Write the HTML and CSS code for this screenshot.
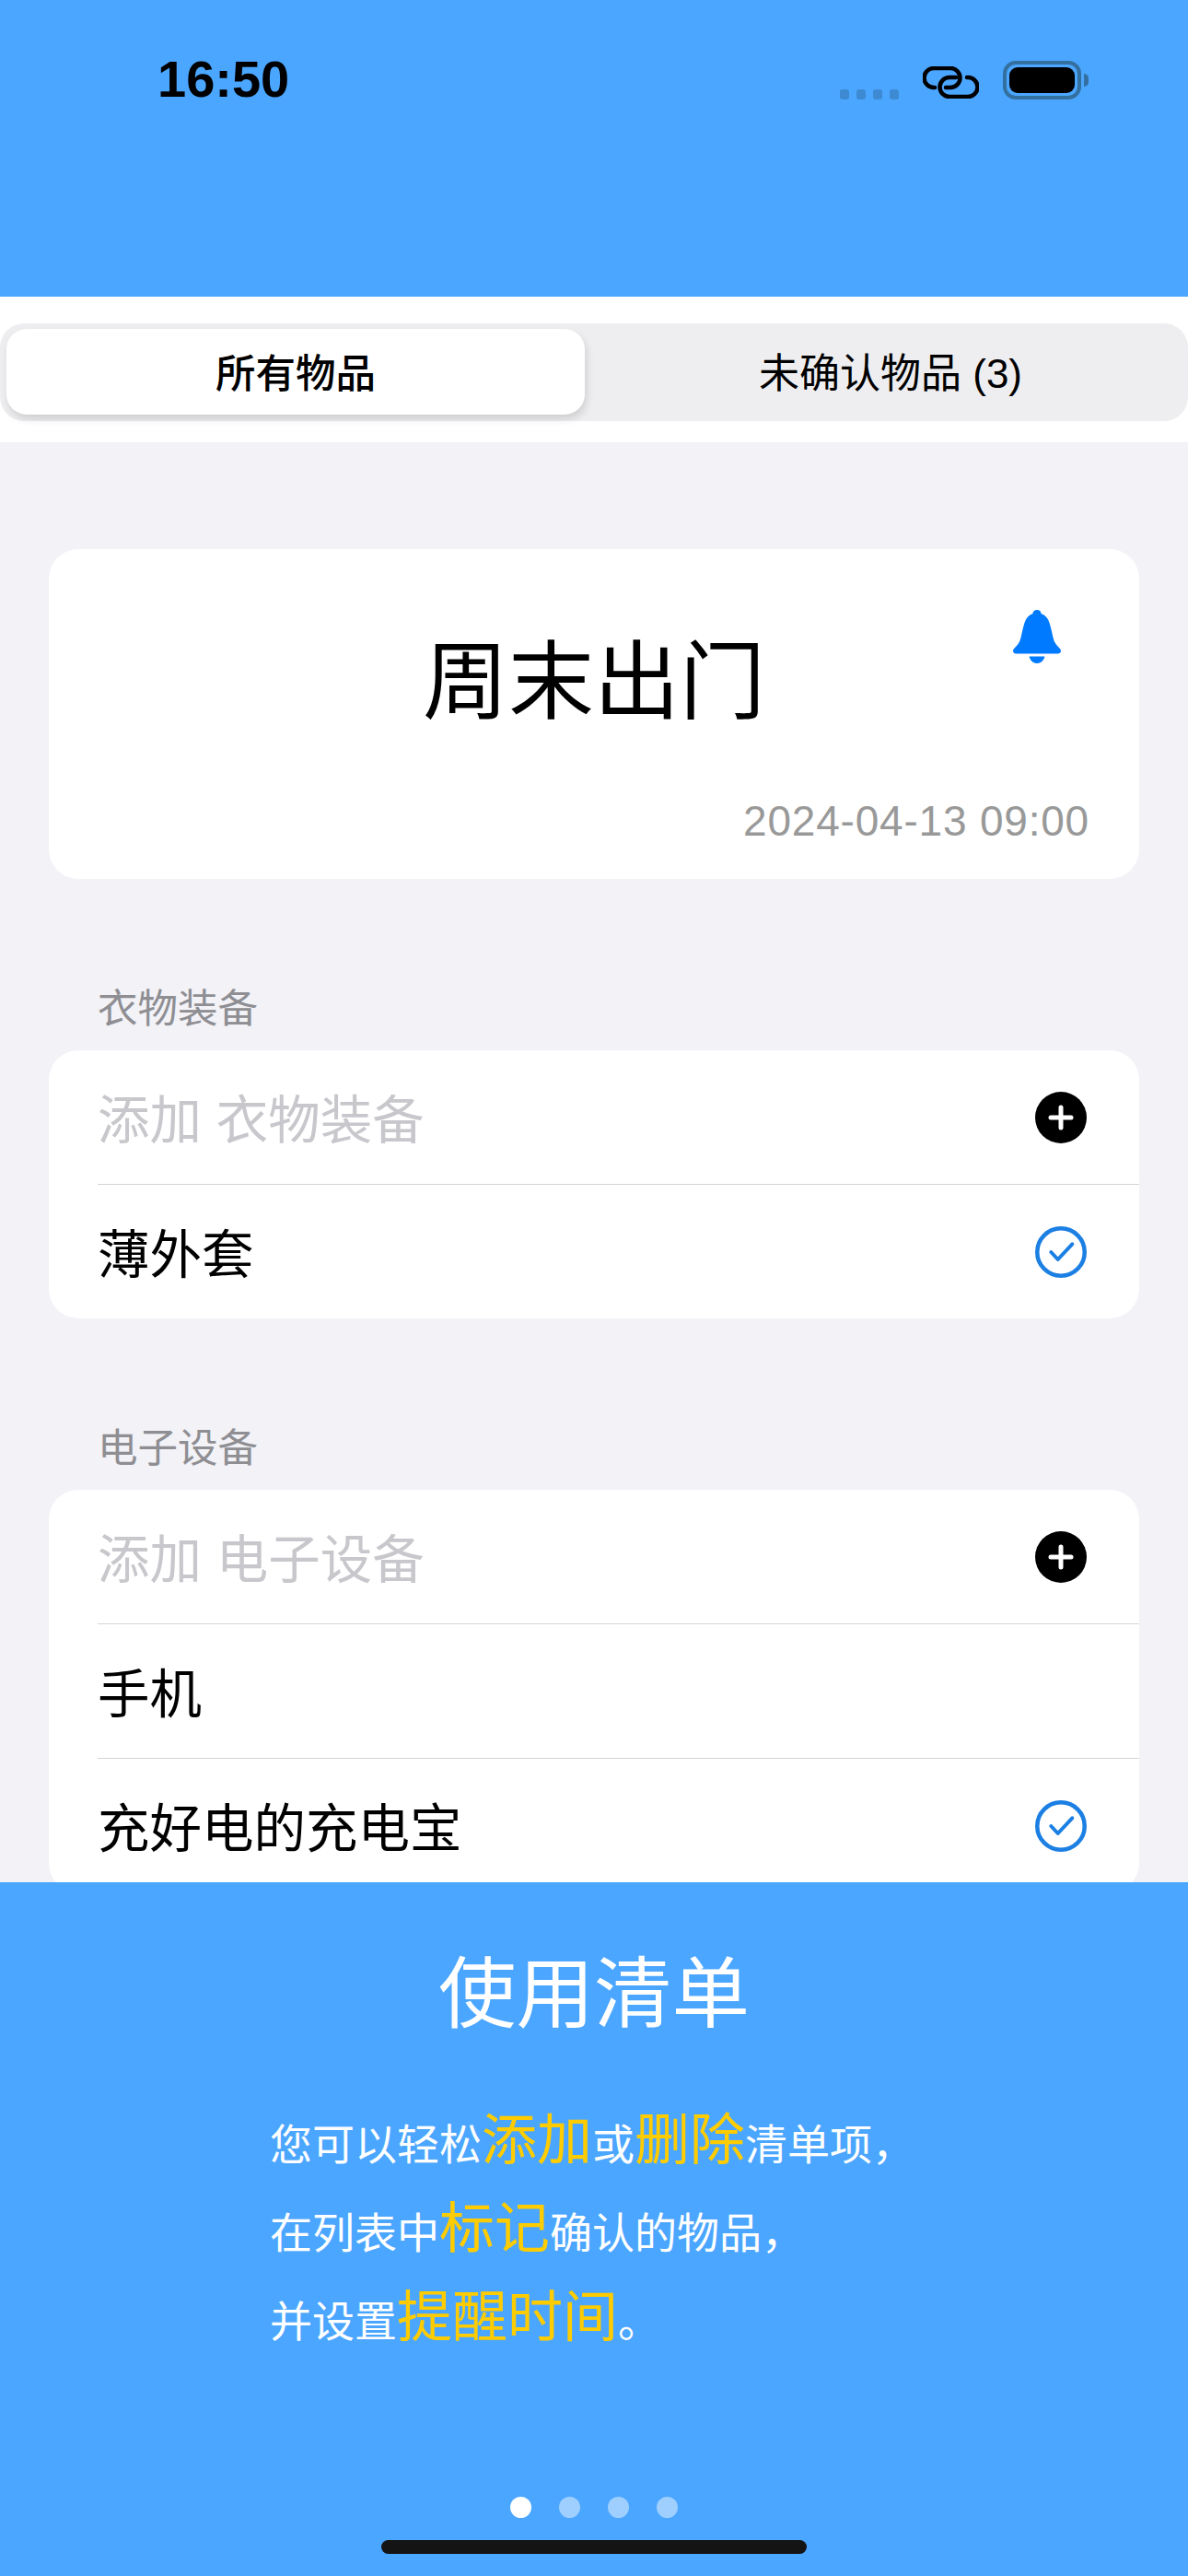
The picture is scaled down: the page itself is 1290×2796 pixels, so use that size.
FILE: index.html
```html
<!DOCTYPE html>
<html lang="zh">
<head>
<meta charset="UTF-8">
<title>使用清单</title>
<link rel="stylesheet" href="styles.css">
</head>
<body>
<div class="page">
    <header class="top">
        <div class="time">16:50</div>
        <div class="status">
            <div class="signal"><i></i><i></i><i></i><i></i></div>
            <svg class="link" width="61" height="35" viewBox="0 0 61 35" fill="none" stroke="#000" stroke-width="4.500" stroke-linecap="round">
                <path d="M13 23H12A10.5 10.5 0 0 1 12 2H30A10.5 10.5 0 0 1 30 23H25"/>
                <path d="M48 12H49A10.5 10.5 0 0 1 49 33H29A10.5 10.5 0 0 1 29 12H36"/>
            </svg>
            <div class="battery"><div class="level"></div></div>
            <div class="nub"></div>
        </div>
    </header>

    <div class="tabbar">
        <div class="tabs">
            <div class="tab on">所有物品</div>
            <div class="tab">未确认物品 (3)</div>
        </div>
    </div>

    <main class="content">
        <section class="card">
            <svg class="bell" width="52" height="58" viewBox="0 0 52 58" fill="#007aff">
                <path d="M26 0C28.500 0 30.500 1.500 30.500 4C35 5.500 38 9 39.500 14C41.500 20 42 24 43.500 30C44.500 35 47 38 50 41C51.500 42.500 52 43.500 52 44.500C52 46.500 50.500 47.500 48.500 47.500H3.500C1.500 47.500 0 46.500 0 44.500C0 43.500 .5 42.500 2 41C5 38 7.500 35 8.500 30C10 24 10.500 20 12.500 14C14 9 17 5.500 21.500 4C21.500 1.500 23.500 0 26 0Z"/>
                <path d="M17.500 50.500H34.500C33.500 55 30 58 26 58S18.500 55 17.500 50.500Z"/>
            </svg>
            <h1 class="card-title">周末出门</h1>
            <div class="card-date">2024-04-13 09:00</div>
        </section>

        <section class="group">
            <h2 class="group-name">衣物装备</h2>
            <ul class="list">
                <li class="row">
                    <span class="hint">添加 衣物装备</span>
                    <svg class="mark" width="56" height="56" viewBox="0 0 56 56"><circle cx="28" cy="28" r="28" fill="#000"/><path d="M28 17V39M17 28H39" stroke="#fff" stroke-width="5" stroke-linecap="round"/></svg>
                </li>
                <li class="row">
                    <span>薄外套</span>
                    <svg class="mark" width="56" height="56" viewBox="0 0 56 56" fill="none" stroke="#1b7fe3"><circle cx="28" cy="28" r="25.750" stroke-width="4.500"/><path d="M17.300 28L24.700 36L40.300 19.300" stroke-width="4" stroke-linecap="round" stroke-linejoin="round"/></svg>
                </li>
            </ul>
        </section>

        <section class="group">
            <h2 class="group-name">电子设备</h2>
            <ul class="list">
                <li class="row">
                    <span class="hint">添加 电子设备</span>
                    <svg class="mark" width="56" height="56" viewBox="0 0 56 56"><circle cx="28" cy="28" r="28" fill="#000"/><path d="M28 17V39M17 28H39" stroke="#fff" stroke-width="5" stroke-linecap="round"/></svg>
                </li>
                <li class="row">
                    <span>手机</span>
                </li>
                <li class="row">
                    <span>充好电的充电宝</span>
                    <svg class="mark" width="56" height="56" viewBox="0 0 56 56" fill="none" stroke="#1b7fe3"><circle cx="28" cy="28" r="25.750" stroke-width="4.500"/><path d="M17.300 28L24.700 36L40.300 19.300" stroke-width="4" stroke-linecap="round" stroke-linejoin="round"/></svg>
                </li>
            </ul>
        </section>
    </main>

    <aside class="guide">
        <h2 class="guide-title">使用清单</h2>
        <div class="guide-text">
            <p>您可以轻松<em>添加</em>或<em>删除</em>清单项，</p>
            <p>在列表中<em>标记</em>确认的物品，</p>
            <p>并设置<em>提醒时间</em>。</p>
        </div>
        <div class="dots">
            <span class="dot on"></span>
            <span class="dot"></span>
            <span class="dot"></span>
            <span class="dot"></span>
        </div>
        <div class="home-bar"></div>
    </aside>
</div>
</body>
</html>
```

FILE: styles.css
```css
*{margin: 0;padding: 0;box-sizing: border-box;list-style: none;}
body{background: #f2f2f7;font-family: "Liberation Sans", "Noto Sans CJK SC", sans-serif;color: #000;}
.page{width: 1290px;height: 2796px;position: relative;overflow: hidden;background: #f2f2f7;}

/* blue header with the status bar */
.top{height: 322px;background: #4ba6ff;display: flex;justify-content: space-between;align-items: flex-start;padding: 55px 108px 0 171px;}
.time{font-size: 56px;line-height: 62px;font-weight: 700;}
.status{display: flex;align-items: flex-end;height: 43px;margin-top: 10px;}
.signal{display: flex;gap: 8px;margin-right: 26px;}
.signal i{width: 10px;height: 11px;border-radius: 3px;background: #3d8ad2;}
.link{display: block;margin-right: 26px;margin-bottom: 1px;}
.battery{width: 85px;height: 42px;border: 4px solid #33709f;border-radius: 14px;padding: 3px;}
.level{height: 100%;background: #000;border-radius: 9px;}
.nub{width: 5px;height: 14px;background: #33709f;border-radius: 0 6px 6px 0;margin: 0 0 14px 3px;}

/* segmented control */
.tabbar{height: 158px;background: #fff;padding-top: 29px;}
.tabs{height: 106px;background: #eeeef0;border-radius: 26px;display: flex;padding: 6px 0 7px 7px;}
.tab{flex: 1;display: flex;align-items: center;justify-content: center;font-size: 44px;padding: 0 0 3px 9px;}
.tab.on{flex: 0 0 628px;padding-left: 0;background: #fff;border-radius: 22px;font-size: 43.5px;font-weight: 500;box-shadow: 2px 5px 8px rgba(0,0,0,.13);}

.content{padding: 116px 53px 0;}
.card{height: 358px;background: #fff;border-radius: 32px;position: relative;padding: 92px 54px 0;}
.bell{position: absolute;top: 66px;right: 85px;}
.card-title{font-size: 93px;line-height: 106px;font-weight: 400;text-align: center;}
.card-date{margin-top: 67px;font-size: 46px;line-height: 60px;letter-spacing: .8px;color: #999;text-align: right;}

.group{margin-top: 110px;}
.group-name{height: 60px;margin-bottom: 16px;padding-left: 53px;font-size: 43.5px;line-height: 62px;font-weight: 400;color: #8e8e93;}
.list{background: #fff;border-radius: 32px;padding-left: 53px;}
.row{height: 145px;display: flex;align-items: center;justify-content: space-between;padding-right: 57px;font-size: 56.5px;}
.row + .row{height: 146px;border-top: 1px solid #d4d4d6;}
.row span{margin-bottom: 4px;}
.hint{color: #c7c7cc;}
.mark{display: block;}

/* guide panel lies over the list */
.guide{position: absolute;left: 0;right: 0;bottom: 0;top: 2043px;background: #4ba6ff;color: #fff;display: flex;flex-direction: column;align-items: center;padding-top: 72px;}
.guide-title{font-size: 84.5px;line-height: 100px;font-weight: 400;}
.guide-text{align-self: stretch;margin-top: 61px;padding-left: 293px;font-size: 46px;}
.guide-text p{height: 96px;line-height: 96px;white-space: nowrap;}
.guide-text em{font-style: normal;font-size: 60px;color: #ffcc00;}
.dots{display: flex;gap: 30px;margin-top: auto;}
.dot{width: 23px;height: 23px;border-radius: 50%;background: #9fcfff;}
.dot.on{background: #fff;}
.home-bar{width: 462px;height: 15px;margin: 24px 0;border-radius: 8px;background: #141414;}
```
